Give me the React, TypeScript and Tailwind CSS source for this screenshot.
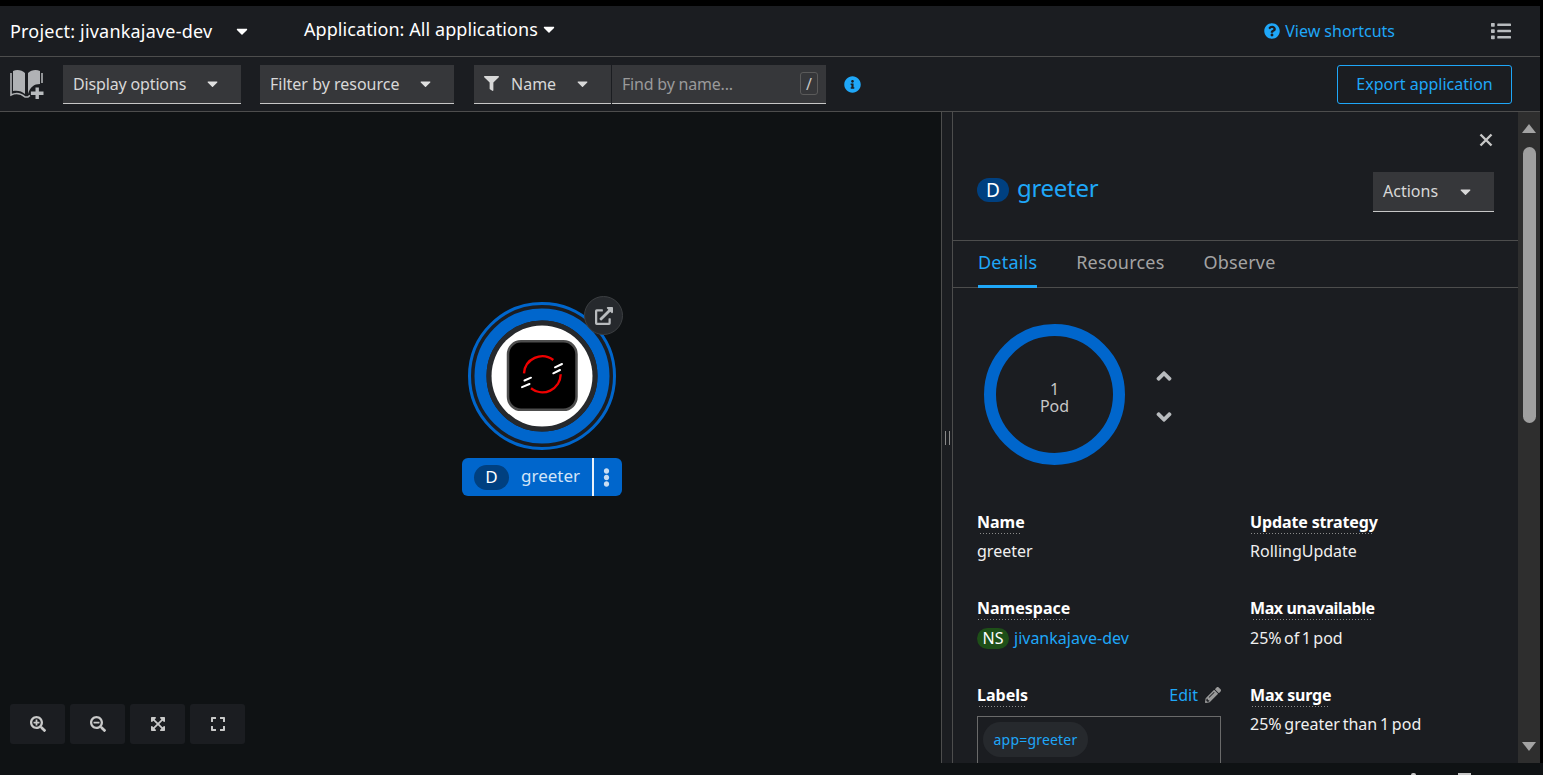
import React from "react";
import { FaCaretDown, FaFilter, FaInfoCircle, FaQuestionCircle, FaPencilAlt, FaAngleUp, FaAngleDown, FaSearchPlus, FaSearchMinus, FaExpandArrowsAlt, FaExpand, FaList, FaExternalLinkAlt, FaEllipsisV } from "react-icons/fa";

const F = { fontFamily: '"Noto Sans", sans-serif' };

function BookIcon() {
  return (
    <svg width="34" height="30" viewBox="0 0 34 30" className="shrink-0">
      <path d="M3 2 C7 0 12 1 15 4 V25 C12 22 7 21 3 22 Z" fill="#b0b2b5" />
      <path d="M18 4 C21 1 26 0 30 2 V15 C24 15 20 18 18 25 Z" fill="#b0b2b5" />
      <path d="M1 4 V26 C6 23.5 11 24.5 15 28 H18 C18.5 27.5 19 27 20 26.5" stroke="#b0b2b5" strokeWidth="1.6" fill="none" />
      <path d="M32 4 V14" stroke="#b0b2b5" strokeWidth="1.6" fill="none" />
      <path d="M25.5 18.5 h3.4 v4 h4.6 v3.4 h-4.6 v4 h-3.4 v-4 h-4.6 v-3.4 h4.6 z" fill="#b8bbbe" />
    </svg>
  );
}

function Select({ label, className, textClass = "" }: { label: string; className: string; textClass?: string }) {
  return (
    <div className={`flex h-[39px] items-center justify-between border-b border-[#c7c7c7] bg-[#36373a] pl-[10px] pr-[20px] text-[#d8d8d8] ${className}`}>
      <span className={textClass}>{label}</span>
      <FaCaretDown className="text-[17px] text-[#e0e0e0]" />
    </div>
  );
}

function Term({ label, value, dotClass, labelClass = "", rowClass = "h-[86px]", headClass = "h-[29px]" }: { label: string; value: React.ReactNode; dotClass: string; labelClass?: string; rowClass?: string; headClass?: string }) {
  return (
    <div className={rowClass}>
      <div className={headClass}>
        <div className={`h-[22px] whitespace-nowrap font-bold leading-[22px] text-white ${labelClass}`}>{label}</div>
        <div className={`h-px bg-[repeating-linear-gradient(90deg,#8a8a8a_0_1px,transparent_1px_3px)] ${dotClass}`} />
      </div>
      <div className="whitespace-nowrap leading-[22px] text-[#f0f0f0]">{value}</div>
    </div>
  );
}

function ZoomBtn({ children }: { children: React.ReactNode }) {
  return <div className="flex h-10 w-[55px] items-center justify-center rounded-[3px] bg-[#1b1d21] text-[16px] text-[#c9c9c9]">{children}</div>;
}

function Node() {
  return (
    <div className="absolute left-[462px] top-[190px] h-[196px] w-[162px]">
      <svg width="162" height="150" viewBox="0 0 162 150" className="absolute left-0 top-0">
        <circle cx="80" cy="74" r="72.5" fill="#1b1d21" stroke="#0066cc" strokeWidth="3" />
        <circle cx="80" cy="74" r="61.5" fill="none" stroke="#0066cc" strokeWidth="12" />
        <circle cx="80" cy="74" r="53" fill="none" stroke="#26292d" strokeWidth="5" />
        <circle cx="80" cy="74" r="50.5" fill="#ffffff" />
        <rect x="46" y="39.3" width="68.5" height="68.5" rx="13" fill="#000000" stroke="#4d4d4d" strokeWidth="2.5" />
        <path d="M91.3 58 A18.3 18.3 0 0 0 62 71.3" fill="none" stroke="#ee0000" strokeWidth="2.4" />
        <path d="M69 86.3 A18.3 18.3 0 0 0 98.7 72.3" fill="none" stroke="#ee0000" strokeWidth="2.4" />
        <path d="M93 65.3 L100 62 M91.3 71.3 L98 68 M62.5 78.5 L69 75.7 M60 85.2 L67.5 82" stroke="#ffffff" strokeWidth="2" strokeLinecap="round" />
      </svg>
      <div className="absolute left-[122px] top-[-6px] flex h-[39px] w-[39px] items-center justify-center rounded-full border border-[#3c3f42] bg-[#26292d] text-[18px] text-[#b8bbbe]">
        <FaExternalLinkAlt />
      </div>
      <div className="absolute left-0 top-[156px] flex h-[38px] w-[160px] items-center rounded-[6px] bg-[#0066cc] pl-[12px]">
        <span className="flex h-[25px] w-[35px] items-center justify-center rounded-full bg-[#004080] text-[17px] text-white">D</span>
        <span className="ml-[12px] w-[71px] -translate-y-[1px] text-[17px] text-[#d2e4f8]">greeter</span>
        <span className="h-full w-[2px] bg-[#e8f1fa]" />
        <FaEllipsisV className="ml-[3px] text-[19px] text-[#c9ddf2]" />
      </div>
    </div>
  );
}

export default function App() {
  return (
    <div style={F} className="relative flex h-[775px] w-[1543px] flex-col overflow-hidden bg-black text-[16px]">
      <div className="h-[763px] shrink-0 pr-[3px] pt-[6px]">
        <div className="flex h-[51px] items-center border-b border-[#4d4d4d] bg-[#1b1d21] pl-[10px] text-[18px] text-white">
          <span className="w-[203px] whitespace-nowrap tracking-[0.2px]">Project: jivankajave-dev</span>
          <FaCaretDown className="ml-[20px] text-[18px]" />
          <span className="ml-[53px] -translate-y-[2px] whitespace-nowrap tracking-[0.07px]">Application: All applications</span>
          <FaCaretDown className="ml-[2px] -translate-y-[2px] text-[18px]" />
          <div className="ml-auto flex items-center gap-[5px] text-[#1fa7f8]">
            <FaQuestionCircle className="text-[16px]" />
            <span className="text-[16px]">View shortcuts</span>
          </div>
          <FaList className="ml-[96px] mr-[29px] text-[20px] text-[#b8bbbe]" />
        </div>
        <div className="flex h-[55px] items-center border-b border-[#4d4d4d] bg-[#1b1d21] pl-[10px]">
          <BookIcon />
          <Select label="Display options" textClass="tracking-[-0.15px]" className="ml-[19px] w-[178px]" />
          <Select label="Filter by resource" className="ml-[19px] w-[194px]" />
          <div className="ml-[20px] flex h-[39px] w-[137px] items-center border-b border-[#c7c7c7] bg-[#36373a] pl-[10px] text-[#d8d8d8]">
            <FaFilter className="text-[15px]" />
            <span className="ml-[12px]">Name</span>
            <FaCaretDown className="ml-auto mr-[20px] text-[17px]" />
          </div>
          <div className="ml-px flex h-[39px] w-[214px] items-center justify-between border-b border-[#c7c7c7] bg-[#36373a] pl-[10px] pr-[8px] text-[#9a9a9a]">
            <span className="tracking-[-0.2px]">Find by name...</span>
            <span className="flex h-[23px] w-[18px] items-center justify-center rounded-[3px] border border-[#5a5a5a] text-[16px] text-[#c7c7c7]">/</span>
          </div>
          <FaInfoCircle className="ml-[18px] text-[17px] text-[#1fa7f8]" />
          <div className="ml-[476px] flex h-[39px] w-[175px] items-center justify-center rounded-[3px] border border-[#1fa7f8] text-[#1fa7f8]">Export application</div>
        </div>
        <div className="flex h-[651px] min-h-0">
          <div className="relative w-[941px] shrink-0 bg-[#0f1214]">
            <Node />
            <div className="absolute bottom-[19px] left-[10px] flex gap-[5px]">
              <ZoomBtn><FaSearchPlus /></ZoomBtn>
              <ZoomBtn><FaSearchMinus /></ZoomBtn>
              <ZoomBtn><FaExpandArrowsAlt /></ZoomBtn>
              <ZoomBtn><FaExpand /></ZoomBtn>
            </div>
          </div>
          <div className="relative flex w-[11px] shrink-0 items-center justify-center border-l border-[#4d4d4d] bg-[#1b1d21]">
            <span className="h-[14px] w-[5px] border-x border-[#8a8a8a]" />
          </div>
          <div className="min-w-0 flex-1 overflow-hidden border-l border-[#4d4d4d] bg-[#1b1d21]">
            <div className="h-[128px] pl-[24px] pr-[24px]">
              <div className="flex h-[42px] justify-end pt-[21px]">
                <svg width="14" height="14" viewBox="0 0 14 14" className="mr-[1px]"><path d="M1.5 1.5 L12.5 12.5 M12.5 1.5 L1.5 12.5" stroke="#c7c7c7" strokeWidth="2.4" /></svg>
              </div>
              <div className="mt-[18px] flex items-start justify-between">
                <div className="flex items-center pt-[6px]">
                  <span className="flex h-[24px] w-[32px] items-center justify-center rounded-full bg-[#004080] text-[19px] text-white">D</span>
                  <span className="ml-[8px] -translate-y-[2px] text-[24px] leading-[24px] tracking-[-0.3px] text-[#1fa7f8]">greeter</span>
                </div>
                <div className="flex h-[40px] w-[121px] items-center justify-between border-b border-[#c7c7c7] bg-[#36373a] pl-[10px] pr-[20px] text-[#d8d8d8]">
                  <span className="-translate-y-[1px]">Actions</span>
                  <FaCaretDown className="text-[17px]" />
                </div>
              </div>
            </div>
            <div className="flex h-[48px] items-stretch border-y border-[#4d4d4d] pl-[25px] text-[18px] tracking-[0.2px]">
              <div className="relative flex items-center pb-[3px] text-[#1fa7f8]">Details<span className="absolute bottom-[-1px] left-0 right-0 h-[3px] bg-[#1fa7f8]" /></div>
              <div className="ml-[39px] flex items-center pb-[3px] text-[#a3a3a3]">Resources</div>
              <div className="ml-[39px] flex items-center pb-[3px] text-[#a3a3a3]">Observe</div>
            </div>
            <div className="flex items-center pl-[31px] pt-[36px]">
              <div className="flex h-[141px] w-[141px] flex-col items-center justify-center rounded-full border-[12px] border-[#0066cc] pt-[6px] text-[16px] leading-[17px] text-[#c7c7c7]">
                <span>1</span>
                <span>Pod</span>
              </div>
              <div className="ml-[27px] flex translate-y-[2px] flex-col gap-[17px] text-[24px] text-[#b8bbbe]">
                <FaAngleUp />
                <FaAngleDown />
              </div>
            </div>
            <div className="mt-[46px] grid grid-cols-[273px_1fr] pl-[24px]">
              <div>
                <Term label="Name" value="greeter" dotClass="ml-[3px] w-[41px]" />
                <Term label="Namespace" rowClass="h-[87px]" headClass="h-[30px]" dotClass="ml-[1px] w-[88px]" value={<span className="flex items-center"><span className="flex h-[21px] w-[32px] items-center justify-center rounded-full bg-[#1e4f18] text-white">NS</span><span className="ml-[5px] text-[#1fa7f8]">jivankajave-dev</span></span>} />
                <div className="w-[244px]">
                  <div className="flex h-[22px] items-center justify-between leading-[22px]">
                    <span className="font-bold text-white">Labels</span>
                    <span className="flex items-center gap-[7px] text-[#1fa7f8]">Edit <FaPencilAlt className="text-[16px] text-[#9a9a9a]" /></span>
                  </div>
                  <div className="ml-[2px] h-px w-[48px] bg-[repeating-linear-gradient(90deg,#8a8a8a_0_1px,transparent_1px_3px)]" />
                  <div className="mt-[9px] h-[60px] border border-[#6a6a6a] px-[5px] pt-[5px]">
                    <span className="inline-flex h-[35px] w-[105px] items-center justify-center rounded-full bg-[#26292d] text-[14px] tracking-[0.2px] text-[#1fa7f8]">app=greeter</span>
                  </div>
                </div>
              </div>
              <div>
                <Term label="Update strategy" labelClass="tracking-[-0.13px]" value="RollingUpdate" dotClass="ml-[1px] w-[123px]" />
                <Term label="Max unavailable" rowClass="h-[87px]" headClass="h-[30px]" labelClass="tracking-[-0.4px]" value={<span className="[word-spacing:-1.7px]">25% of 1 pod</span>} dotClass="ml-[3px] w-[120px]" />
                <Term label="Max surge" labelClass="tracking-[-0.2px]" value={<span className="[word-spacing:-1.4px]">25% greater than 1 pod</span>} dotClass="ml-[2px] w-[77px]" />
              </div>
            </div>
          </div>
          <div className="relative w-[22px] shrink-0 bg-[#2e2e2e]">
            <span className="absolute left-[4px] top-[12px] h-0 w-0 border-x-[7px] border-b-[9px] border-x-transparent border-b-[#a3a3a3]" />
            <div className="absolute left-[5px] top-[35px] h-[276px] w-[13px] rounded-full bg-[#9f9f9f]" />
            <span className="absolute bottom-[12px] left-[4px] h-0 w-0 border-x-[7px] border-t-[9px] border-x-transparent border-t-[#a3a3a3]" />
          </div>
        </div>
      </div>
      <div className="relative min-h-0 flex-1 bg-[#0f1214]">
        <span className="absolute left-[1411px] top-[10px] h-[2px] w-[5px] rounded-t-full bg-[#c7c7c7]" />
        <span className="absolute left-[1458px] top-[10px] h-[2px] w-[13px] bg-[#c7c7c7]" />
      </div>
    </div>
  );
}
